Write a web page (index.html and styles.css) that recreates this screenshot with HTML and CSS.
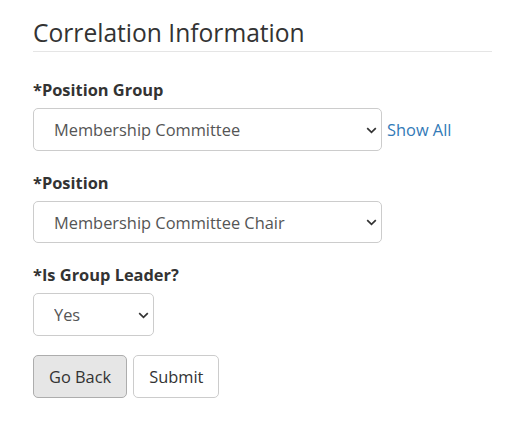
FILE: index.html
```
<!DOCTYPE html>
<html lang="en">
<head>
<meta charset="utf-8">
<title>Correlation Information</title>
<link rel="stylesheet" href="styles.css">
</head>
<body>
<form class="page">
  <h2 class="legend">Correlation Information</h2>

  <div class="form-group">
    <label class="label" for="group">*Position Group</label>
    <div class="row">
      <span class="select-wrap wide">
        <select id="group" class="select">
          <option>Membership Committee</option>
        </select>
        <svg class="chevron" width="11" height="7" viewBox="0 0 11 7"><path d="M1.2 1.2 L5.5 5.3 L9.8 1.2" fill="none" stroke="#333" stroke-width="1.7"/></svg>
      </span>
      <a class="link" href="#">Show All</a>
    </div>
  </div>

  <div class="form-group">
    <label class="label" for="position">*Position</label>
    <div class="row">
      <span class="select-wrap wide">
        <select id="position" class="select">
          <option>Membership Committee Chair</option>
        </select>
        <svg class="chevron" width="11" height="7" viewBox="0 0 11 7"><path d="M1.2 1.2 L5.5 5.3 L9.8 1.2" fill="none" stroke="#333" stroke-width="1.7"/></svg>
      </span>
    </div>
  </div>

  <div class="form-group">
    <label class="label" for="leader">*Is Group Leader?</label>
    <div class="row">
      <span class="select-wrap narrow">
        <select id="leader" class="select">
          <option>Yes</option>
        </select>
        <svg class="chevron" width="11" height="7" viewBox="0 0 11 7"><path d="M1.2 1.2 L5.5 5.3 L9.8 1.2" fill="none" stroke="#333" stroke-width="1.7"/></svg>
      </span>
    </div>
  </div>

  <div class="actions">
    <button type="button" class="btn btn-active">Go Back</button>
    <button type="button" class="btn">Submit</button>
  </div>
</form>
</body>
</html>
```
FILE: styles.css
```
* { box-sizing: border-box; }
html, body { margin: 0; padding: 0; background: #fff; }
body {
  font-family: "Open Sans", "Noto Sans", sans-serif;
  color: #333;
  font-size: 16.4px;
}
.page {
  padding: 13.5px 14px 0 33px;
}
.legend {
  margin: 0 0 25px 0;
  padding: 0;
  font-size: 24.6px;
  font-weight: 400;
  line-height: 37.5px;
  color: #333;
  border-bottom: 1px solid #e5e5e5;
}
.form-group {
  margin-bottom: 18.75px;
}
.label {
  display: block;
  font-weight: 700;
  font-size: 16.4px;
  line-height: 25px;
  margin-bottom: 6.25px;
}
.row {
  display: flex;
  align-items: center;
}
.select-wrap {
  position: relative;
  display: block;
}
.select-wrap.wide { width: 349px; }
.select-wrap.narrow { width: 121px; }
.select {
  -webkit-appearance: none;
  appearance: none;
  display: block;
  width: 100%;
  height: 42.5px;
  padding: 0 24px 0 20px;
  font-family: inherit;
  font-size: 16.4px;
  color: #555;
  background: #fff;
  border: 1px solid #ccc;
  border-radius: 5px;
  outline: none;
}
.chevron {
  position: absolute;
  right: 5px;
  top: 50%;
  margin-top: -3px;
  pointer-events: none;
}
.link {
  margin-left: 5px;
  color: #337ab7;
  text-decoration: none;
  font-size: 16.4px;
}
.actions {
  display: flex;
  gap: 6px;
}
.btn {
  height: 43px;
  padding: 0 15px;
  font-family: inherit;
  font-size: 16.4px;
  color: #333;
  background: #fff;
  border: 1px solid #ccc;
  border-radius: 5px;
}
.btn-active {
  background: #e6e6e6;
  border-color: #adadad;
}
```
